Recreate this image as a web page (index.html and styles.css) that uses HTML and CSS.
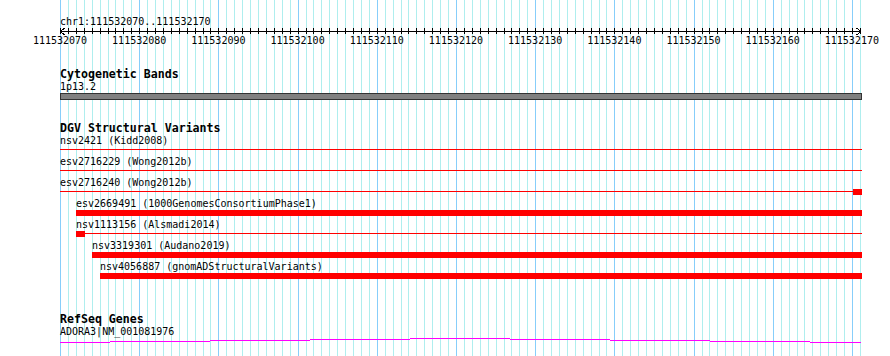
FILE: index.html
```html
<!DOCTYPE html>
<html lang="en">
<head>
  <meta charset="UTF-8">
  <meta name="viewport" content="width=device-width, initial-scale=1.0">
  <title>chr1:111532070..111532170</title>
  <link rel="stylesheet" href="styles.css">
</head>
<body>
  <div class="view">
    <svg id="grid" class="grid" width="890" height="356"></svg>

    <div class="ruler">
      <div class="ruler-loc">chr1:111532070..111532170</div>
      <svg id="axis" class="axis" width="802" height="7"></svg>
      <div class="ruler-nums">
        <span>111532070</span>
        <span>111532080</span>
        <span>111532090</span>
        <span>111532100</span>
        <span>111532110</span>
        <span>111532120</span>
        <span>111532130</span>
        <span>111532140</span>
        <span>111532150</span>
        <span>111532160</span>
        <span>111532170</span>
      </div>
    </div>

    <section class="track track-cyto">
      <h2 class="track-title">Cytogenetic Bands</h2>
      <div class="label">1p13.2</div>
      <div class="band"></div>
    </section>

    <section class="track track-dgv">
      <h2 class="track-title">DGV Structural Variants</h2>
      <div class="sv-row">
        <div class="label">nsv2421 (Kidd2008)</div>
        <div class="feat"><div class="thin"></div></div>
      </div>
      <div class="sv-row">
        <div class="label">esv2716229 (Wong2012b)</div>
        <div class="feat"><div class="thin"></div></div>
      </div>
      <div class="sv-row">
        <div class="label">esv2716240 (Wong2012b)</div>
        <div class="feat"><div class="thin"></div><div class="box"></div></div>
      </div>
      <div class="sv-row" style="padding-left:16px">
        <div class="label">esv2669491 (1000GenomesConsortiumPhase1)</div>
        <div class="feat"><div class="bar"></div></div>
      </div>
      <div class="sv-row" style="padding-left:16px">
        <div class="label">nsv1113156 (Alsmadi2014)</div>
        <div class="feat"><div class="box"></div><div class="thin"></div></div>
      </div>
      <div class="sv-row" style="padding-left:32px">
        <div class="label">nsv3319301 (Audano2019)</div>
        <div class="feat"><div class="bar"></div></div>
      </div>
      <div class="sv-row" style="padding-left:40px">
        <div class="label">nsv4056887 (gnomADStructuralVariants)</div>
        <div class="feat"><div class="bar"></div></div>
      </div>
    </section>

    <section class="track track-genes">
      <h2 class="track-title">RefSeq Genes</h2>
      <div class="label">ADORA3|NM_001081976</div>
      <svg class="intron" width="802" height="6">
        <rect x="0" y="4" width="50" height="1"/>
        <rect x="50" y="3" width="100" height="1"/>
        <rect x="150" y="2" width="100" height="1"/>
        <rect x="250" y="1" width="100" height="1"/>
        <rect x="350" y="0" width="100" height="1"/>
        <rect x="450" y="1" width="100" height="1"/>
        <rect x="550" y="2" width="100" height="1"/>
        <rect x="650" y="3" width="100" height="1"/>
        <rect x="750" y="4" width="51" height="1"/>
      </svg>
    </section>
  </div>

  <script>
    const NS = "http://www.w3.org/2000/svg";
    const LEFT = 60;
    const BP = 7.92; // 101 bp over 800 px

    const grid = document.getElementById("grid");
    const axis = document.getElementById("axis");

    function line(svg, x1, y1, x2, y2, cls) {
      const l = document.createElementNS(NS, "line");
      l.setAttribute("x1", x1);
      l.setAttribute("y1", y1);
      l.setAttribute("x2", x2);
      l.setAttribute("y2", y2);
      if (cls) l.setAttribute("class", cls);
      svg.appendChild(l);
    }

    // vertical grid, one line per base, darker every 10
    for (let i = 0; i <= 101; i++) {
      const x = Math.round(LEFT + i * BP) + 0.5;
      line(grid, x, 0, x, 356, i % 10 === 0 && i < 101 ? "major" : "minor");
    }

    // ruler axis with ticks and arrow heads
    line(axis, 0, 3.5, 801, 3.5);
    for (let i = 0; i <= 101; i++) {
      const x = Math.round(i * BP) + 0.5;
      line(axis, x, 0, x, 6);
    }
    line(axis, 0.5, 3.5, 4.5, 0);
    line(axis, 0.5, 3.5, 4.5, 7);
    line(axis, 801, 3.5, 796.5, 0);
    line(axis, 801, 3.5, 796.5, 7);
  </script>
</body>
</html>
```

FILE: styles.css
```css
body {
  margin: 0;
  background-color: #fff;
  color: #000;
  font-family: "DejaVu Sans Mono", "Liberation Mono", monospace;
  font-size: 10px;
}
.view {
  position: relative;
  width: 890px;
  height: 356px;
  padding-left: 60px;
  box-sizing: border-box;
  overflow: hidden;
}
.grid {
  position: absolute;
  left: 0;
  top: 0;
  z-index: -1;
}
.grid line {
  stroke-width: 1;
  shape-rendering: crispEdges;
}
.grid .minor {
  stroke: #afeeee;
}
.grid .major {
  stroke: #87cefa;
}
.ruler-loc {
  margin-top: 16px;
  line-height: 12px;
}
.axis {
  display: block;
  overflow: visible;
}
.axis line {
  stroke: #000;
  stroke-width: 1;
  shape-rendering: crispEdges;
}
.ruler-nums {
  display: flex;
  margin-left: -39.6px;
  line-height: 12px;
  white-space: nowrap;
}
.ruler-nums span {
  flex: 0 0 79.2px;
  text-align: center;
}
.track {
  width: 802px;
}
.track-title {
  margin: 0;
  font-size: 11.6px;
  font-weight: bold;
  line-height: 13px;
  white-space: nowrap;
}
.label {
  line-height: 12px;
  white-space: nowrap;
}
.track-cyto {
  margin-top: 21px;
}
.band {
  height: 5px;
  border: 1px solid #333;
  background-color: #808080;
}
.track-dgv {
  margin-top: 22px;
}
.feat {
  display: flex;
  align-items: flex-start;
  height: 6px;
  margin-bottom: 3px;
}
.feat .thin {
  flex: 1;
  height: 1px;
  margin-top: 2px;
  background-color: #f00;
}
.feat .bar {
  flex: 1;
  height: 6px;
  background-color: #f00;
}
.feat .box {
  flex: 0 0 9px;
  height: 6px;
  background-color: #f00;
}
.track-genes {
  margin-top: 34px;
}
.intron {
  display: block;
  fill: #f0f;
}
```
